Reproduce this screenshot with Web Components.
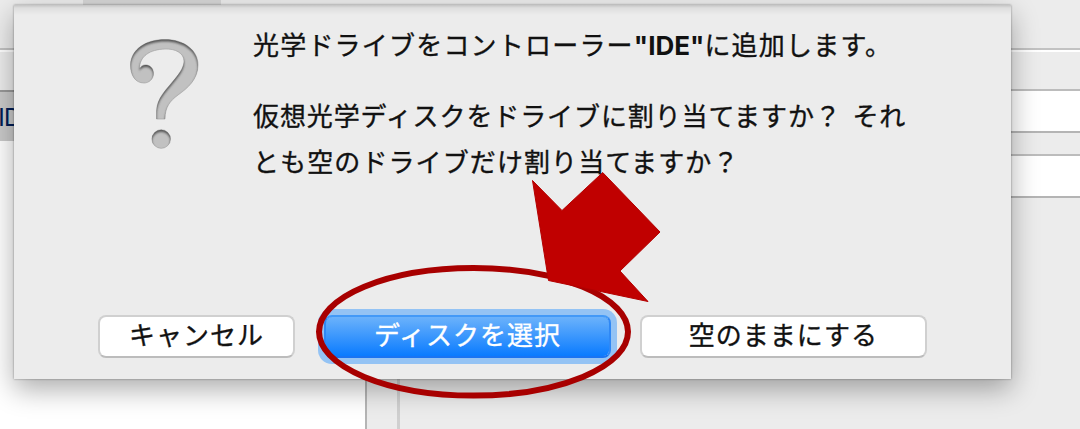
<!DOCTYPE html>
<html lang="ja">
<head>
<meta charset="utf-8">
<title>VirtualBox</title>
<style>
html,body{margin:0;padding:0;width:1080px;height:429px;overflow:hidden;background:#ececec}
body{position:relative;font-family:"Liberation Sans","Noto Sans CJK JP",sans-serif;color:#111}
</style>
</head>
<body>
<vm-window></vm-window>
<sheet-dialog>
  <question-icon slot="icon"></question-icon>
  <message-line slot="text" style="--track:1.2px;height:71px">光学ドライブをコントローラー<b>"IDE"</b>に追加します。</message-line>
  <message-line slot="text" style="--track:.9px;word-spacing:4px">仮想光学ディスクをドライブに割り当てますか？ それ</message-line>
  <message-line slot="text" style="--track:1.1px">とも空のドライブだけ割り当てますか？</message-line>
  <push-button slot="actions" style="width:197px">キャンセル</push-button>
  <push-button slot="actions" primary style="width:287px;margin-left:29px">ディスクを選択</push-button>
  <push-button slot="actions" style="width:287px;margin-left:29px">空のままにする</push-button>
</sheet-dialog>
<callout-mark></callout-mark>
<script>
const define = (name, html) => customElements.define(name, class extends HTMLElement {
  constructor() {
    super();
    this.attachShadow({ mode: 'open' }).innerHTML = html;
  }
});

define('vm-window', `
<style>
:host{display:flex;flex-direction:column;width:1080px;height:429px;background:#ececec}
*{box-sizing:border-box}
.bar{height:48px;flex:none;background:#ececec}
.tab{width:138px;height:6px;margin-left:83px;background:#d6d6d6}
.rule{height:4px;flex:none;background:linear-gradient(#c2c2c2 0 2px,#fff 2px)}
.body{flex:1;display:flex;min-height:0}
.tree{width:367px;border-right:2px solid #b5b5b5;background:#fff}
.head{height:38px;background:#ececec}
.row{height:51px;background:#cacaca;border-top:2px solid #999;font:25px/51px "Liberation Sans",sans-serif;color:#001c55;white-space:nowrap}
.row span{display:block;letter-spacing:-1px;margin-left:-2px}
.gap{width:30px;background:#ececec}
.form{flex:1;border-left:3px solid #d0d0d0;padding-top:37px}
.field{height:44px;background:#fff;border-top:2px solid #bcbcbc;border-bottom:2px solid #b4b4b4;margin-bottom:21px}
</style>
<div class="bar"><div class="tab"></div></div><div class="rule"></div>
<div class="body"><div class="tree"><div class="head"></div><div class="row"><span>ID</span></div></div><div class="gap"></div>
<div class="form"><div class="field"></div><div class="field"></div></div></div>`);

define('sheet-dialog', `
<style>
:host{position:absolute;left:14px;top:5px;width:997px;height:374px;box-sizing:border-box;display:flex;flex-direction:column;
background:linear-gradient(#c4c4c4,#dedede 3px,#ececec 10px);
box-shadow:0 0 2px rgba(0,0,0,.4),0 10px 26px rgba(0,0,0,.33)}
.main{display:flex;height:310px}
.icon{width:239px;flex:none}
.text{flex:1;padding-top:16px}
.actions{display:flex;padding-left:84px}
</style>
<div class="main"><div class="icon"><slot name="icon"></slot></div><div class="text"><slot name="text"></slot></div></div>
<div class="actions"><slot name="actions"></slot></div>`);

define('message-line', `
<style>:host{display:block;height:46px;line-height:46px;font-size:26px;letter-spacing:var(--track);white-space:nowrap;font-family:"Noto Sans CJK JP",sans-serif;-webkit-text-stroke:.35px currentColor}
::slotted(b){font-family:Inter,sans-serif;font-weight:700;font-size:26px;letter-spacing:0;-webkit-text-stroke:0}</style><slot></slot>`);

define('push-button', `
<style>
:host{display:block;box-sizing:border-box;height:43px;border:2px solid #d0d0d0;border-bottom-color:#bcbcbc;border-radius:8px;background:#fff;
text-align:center;font:26px/34px "Noto Sans CJK JP",sans-serif;letter-spacing:1px;white-space:nowrap;-webkit-text-stroke:.35px currentColor}
:host([primary]){color:#fff;border-color:#4399f7 #2f88f5 #1a74f2;background:linear-gradient(#6bb2fb,#0a7bff) padding-box;background-color:#2d8bf6;box-shadow:0 0 0 6px #94c3f4}
</style><slot></slot>`);

define('question-icon', `
<style>:host{display:block;padding:31px 0 0 113px}svg{display:block}</style>
<svg width="75" height="116" viewBox="127 36 75 116">
<defs>
<path id="q" d="M156.500 119V111C157 98 166 90 174 80C181 72 184 66 184 61C184 53 175 48.500 165 49C150 49.500 139.500 56 139.500 69C141 65.500 144 64.500 147 65C151 66 153.500 69 153.500 73.500C153.500 79 149 83 144 83C135 83 130.500 75 130.500 65C131 49 146 39.500 165 39.500C184 39.500 198 50 198 65C198 79 188 88 178 95C170 101 165 107 165 119ZM170.500 139a9.300 9.300 0 1 1-18.600 0a9.300 9.300 0 1 1 18.600 0Z"/>
<clipPath id="c"><use href="#q"/></clipPath>
<filter id="f"><feGaussianBlur stdDeviation="1.1"/></filter>
</defs>
<use href="#q" fill="#c1c1c1" stroke="#a6a6a6" stroke-width=".7"/>
<g clip-path="url(#c)"><path fill-rule="evenodd" transform="translate(0 2)" filter="url(#f)" fill="#555" d="M120 25H210V160H120ZM156.500 119V111C157 98 166 90 174 80C181 72 184 66 184 61C184 53 175 48.500 165 49C150 49.500 139.500 56 139.500 69C141 65.500 144 64.500 147 65C151 66 153.500 69 153.500 73.500C153.500 79 149 83 144 83C135 83 130.500 75 130.500 65C131 49 146 39.500 165 39.500C184 39.500 198 50 198 65C198 79 188 88 178 95C170 101 165 107 165 121H156.500ZM170.500 139a9.300 9.300 0 1 1-18.600 0a9.300 9.300 0 1 1 18.600 0Z"/></g>
</svg>`);

define('callout-mark', `
<style>:host{position:absolute;left:0;top:0;pointer-events:none}svg{display:block}</style>
<svg width="1080" height="429"><ellipse cx="473.500" cy="331.800" rx="154.500" ry="63.800" fill="none" stroke="#a80000" stroke-width="6"/>
<path d="M532.500 180.500L562 210.500L602.700 172.500L660 232L620 271L648 301.500L548.500 280.500Z" fill="#c00000" stroke="#b40000"/></svg>`);
</script>
</body>
</html>
